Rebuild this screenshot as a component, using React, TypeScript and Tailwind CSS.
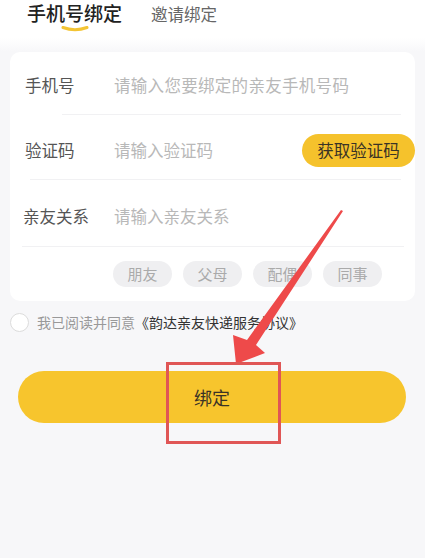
const font = { fontFamily: '"Noto Sans CJK SC", "Noto Sans", sans-serif' };

const chips = ['朋友', '父母', '配偶', '同事'];

export default function App() {
  return (
    <div className="relative w-[425px] h-[558px] overflow-hidden bg-[#f7f7f9]" style={font}>
      {/* tabs */}
      <div className="h-[38px] bg-white flex items-start pt-[1px] pl-[27px] gap-[29px]">
        <div className="relative flex flex-col items-center">
          <span className="text-[19px] leading-[24px] font-medium text-[#222]">手机号绑定</span>
          <svg width="28" height="6" viewBox="0 0 28 6" className="mt-[1px]">
            <path d="M2 1.5 Q14 6 26 1.5" stroke="#f3c433" strokeWidth="3" fill="none" strokeLinecap="round" />
          </svg>
        </div>
        <span className="text-[16.5px] leading-[24px] text-[#666] pt-[1px]">邀请绑定</span>
      </div>
      <div className="h-[14px] bg-gradient-to-b from-white to-[#f7f7f9]" />

      {/* form card */}
      <div className="mx-[10px] bg-white rounded-[10px] text-[16.5px]">
        <div className="h-[62px] flex items-center pt-[4px] pl-[15px]">
          <span className="w-[89px] text-[#555]">手机号</span>
          <span className="text-[#b8b8b8] tracking-[0.3px]">请输入您要绑定的亲友手机号码</span>
        </div>
        <div className="ml-[52px] mr-[14px] h-px bg-[#f1f1f3]" />
        <div className="h-[64px] flex items-center pt-[7px] pl-[15px]">
          <span className="w-[89px] text-[#555]">验证码</span>
          <span className="flex-1 text-[#b8b8b8]">请输入验证码</span>
          <span className="h-[33px] w-[113px] rounded-full bg-[#f5c22c] flex items-center justify-center text-[16.5px] text-[#3a3326]">
            获取验证码
          </span>
        </div>
        <div className="ml-[20px] mr-[14px] h-px bg-[#f1f1f3]" />
        <div className="h-[66px] flex items-center pt-[6px] pl-[13px]">
          <span className="w-[91px] text-[#555]">亲友关系</span>
          <span className="text-[#b8b8b8]">请输入亲友关系</span>
        </div>
        <div className="ml-[12px] mr-[11px] h-px bg-[#f1f1f3]" />
        <div className="flex gap-[11px] pl-[103px] pt-[14px] pb-[14px]">
          {chips.map((c) => (
            <span
              key={c}
              className="w-[59px] h-[26px] rounded-full bg-[#efeff1] flex items-center justify-center text-[15px] text-[#aaa]"
            >
              {c}
            </span>
          ))}
        </div>
      </div>

      {/* agreement */}
      <div className="flex items-center pl-[10px] mt-[11px] text-[14px]">
        <span className="w-[19px] h-[19px] rounded-full border border-[#dcdcdc] bg-white" />
        <span className="ml-[8px] text-[#999]">我已阅读并同意</span>
        <span className="text-[#333]">《韵达亲友快递服务协议》</span>
      </div>

      {/* submit */}
      <div className="mx-[18px] mt-[38px] w-[388px] h-[52px] rounded-full bg-[#f7c52d] flex items-center justify-center text-[18px] text-[#3a3326]">
        绑定
      </div>

      {/* annotation overlay */}
      <svg className="absolute left-0 top-0 pointer-events-none" width="425" height="558" viewBox="0 0 425 558">
        <polygon
          points="343,211 256,345 265,353 236,364 233,335 247,340 341,210"
          fill="#ee4a4a"
        />
        <rect x="167.5" y="363.5" width="112" height="79" fill="none" stroke="#e05656" strokeWidth="3" />
      </svg>
    </div>
  );
}
